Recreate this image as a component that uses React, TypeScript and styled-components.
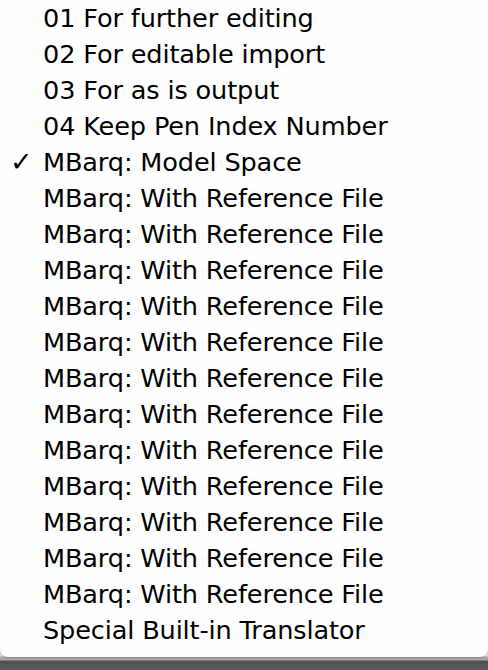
import React from 'react';
import styled, { createGlobalStyle } from 'styled-components';

const GlobalStyle = createGlobalStyle`
    html, body {
        margin: 0;
        padding: 0;
        width: 488px;
        height: 670px;
        overflow: hidden;
    }
`;

const Screen = styled.div`
    width: 488px;
    height: 670px;
    display: flex;
    flex-direction: column;
    background: linear-gradient(
        to bottom,
        #e2e2e2 0,
        #e2e2e2 656px,
        #a7a7a7 657px,
        #a9a9a9 660px,
        #505050 661px,
        #5c5c5c 670px
    );
`;

const Menu = styled.ul`
    list-style: none;
    margin: 0;
    padding: 0 0 9px 0;
    width: 488px;
    background: #fefefe;
    border-radius: 0 0 8px 8px;
    box-shadow: 0 1px 2px rgba(0, 0, 0, 0.2);
    font-family: 'DejaVu Sans', 'Liberation Sans', sans-serif;
    font-size: 25.6px;
    color: #000;
`;

const Item = styled.li`
    display: flex;
    align-items: center;
    height: 36px;
    padding-left: 43px;
    position: relative;
    white-space: nowrap;
    letter-spacing: -0.15px;
`;

const Check = styled.span`
    position: absolute;
    left: 10px;
    top: 0;
    line-height: 36px;
    font-size: 27px;
    font-weight: bold;
`;

const items = [
    '01 For further editing',
    '02 For editable import',
    '03 For as is output',
    '04 Keep Pen Index Number',
    'MBarq: Model Space',
    ...Array(12).fill('MBarq: With Reference File'),
    'Special Built-in Translator',
];

export default function App() {
    return (
        <>
            <GlobalStyle />
            <Screen>
                <Menu>
                    {items.map((label, i) => (
                        <Item key={i}>
                            {i === 4 && <Check>✓</Check>}
                            {label}
                        </Item>
                    ))}
                </Menu>
            </Screen>
        </>
    );
}
